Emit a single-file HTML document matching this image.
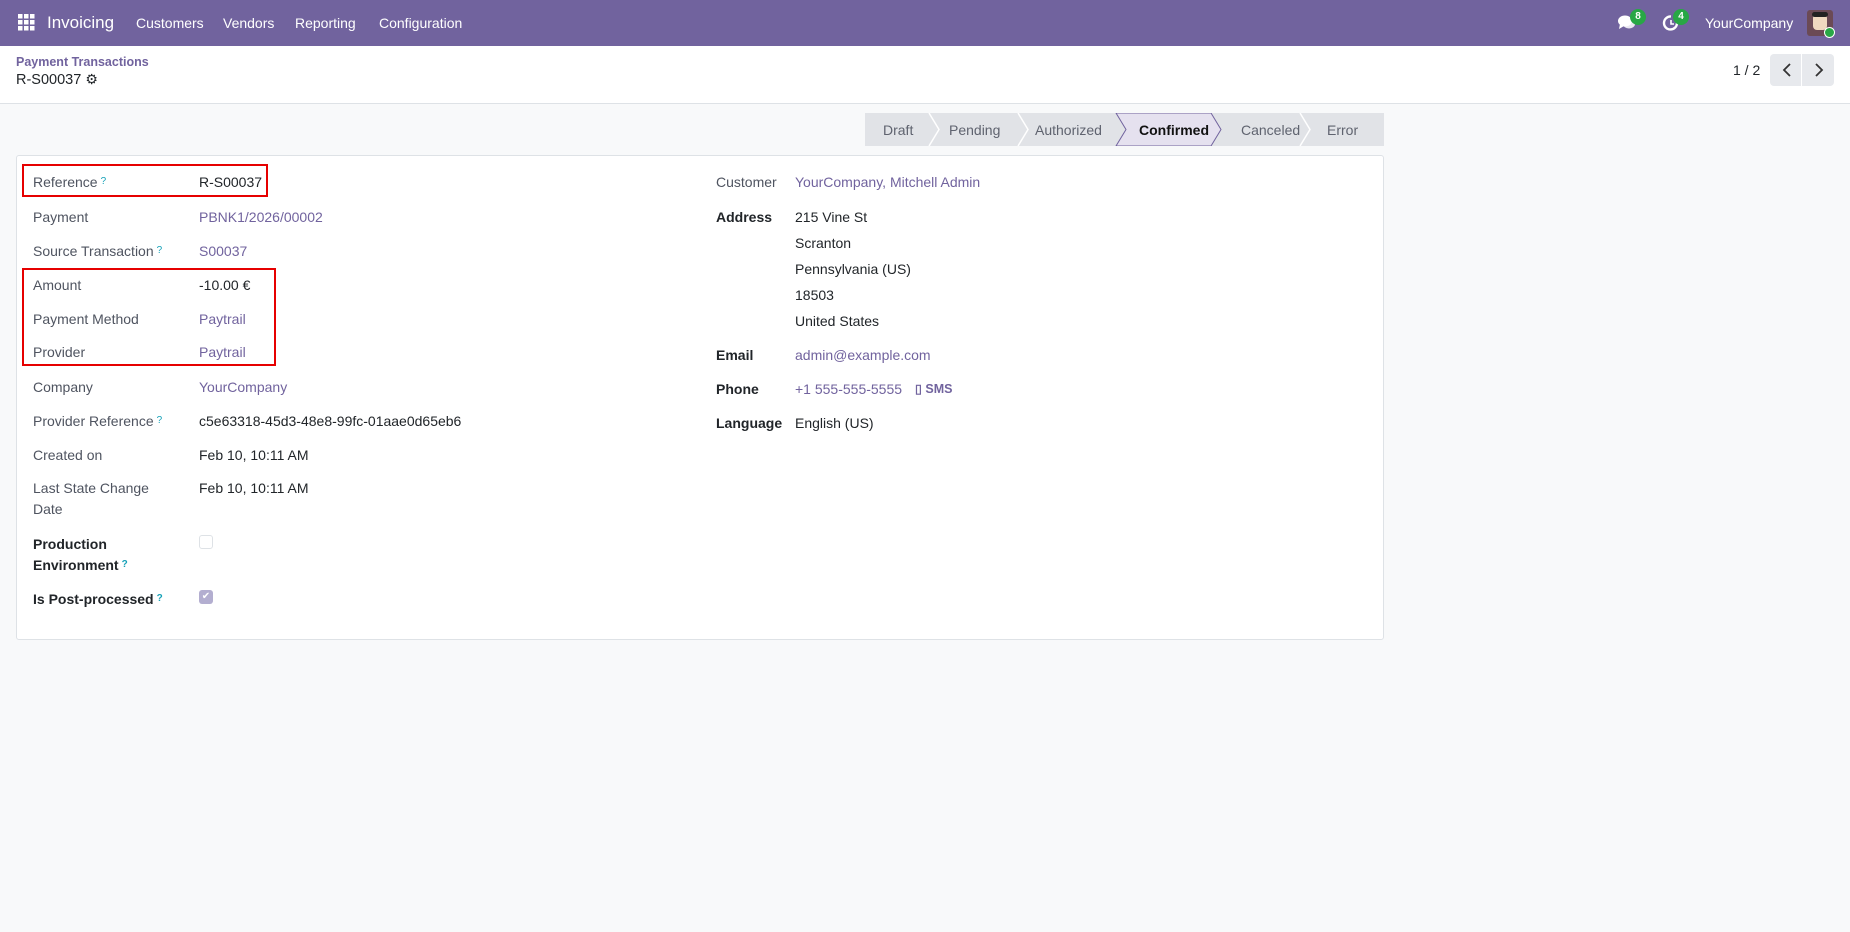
<!DOCTYPE html>
<html><head><meta charset="utf-8"><style>
*{box-sizing:border-box;margin:0;padding:0}
body{width:1850px;height:932px;background:#f8f9fa;font-family:"Liberation Sans",sans-serif;font-size:14px;color:#212529;position:relative;overflow:hidden}
.nav{position:absolute;left:0;top:0;width:1850px;height:46px;background:#71639e;color:#fff}
.nav span{position:absolute;top:15px;font-size:14px}
.cp{position:absolute;left:0;top:46px;width:1850px;height:58px;background:#fff;border-bottom:1px solid #dee2e6}
.a{position:absolute;white-space:nowrap;line-height:20px}
.l{color:#4f5460}
.b{font-weight:bold;color:#212529}
.k{color:#71639e}
.q{color:#17a2b8;font-size:10px;vertical-align:top;margin-left:3px}
.sheet{position:absolute;left:16px;top:155px;width:1368px;height:485px;background:#fff;border:1px solid #dee2e6;border-radius:3px}
.red{position:absolute;border:2px solid #e60000}
.badge{position:absolute;background:#28a745;color:#fff;font-size:10px;font-weight:bold;border-radius:8px;width:16px;height:16px;text-align:center;line-height:16px}
</style></head><body>
<div class="nav">
<svg style="position:absolute;left:18px;top:14px" width="17" height="17" viewBox="0 0 17 17" fill="#fff"><rect x="0" y="0" width="4.5" height="4.5"/><rect x="6" y="0" width="4.5" height="4.5"/><rect x="12" y="0" width="4.5" height="4.5"/><rect x="0" y="6" width="4.5" height="4.5"/><rect x="6" y="6" width="4.5" height="4.5"/><rect x="12" y="6" width="4.5" height="4.5"/><rect x="0" y="12" width="4.5" height="4.5"/><rect x="6" y="12" width="4.5" height="4.5"/><rect x="12" y="12" width="4.5" height="4.5"/></svg>
<span style="left:47px;top:13px;font-size:17px">Invoicing</span>
<span style="left:136px">Customers</span>
<span style="left:223px">Vendors</span>
<span style="left:295px">Reporting</span>
<span style="left:379px">Configuration</span>
<svg style="position:absolute;left:1617px;top:14px" width="20" height="18" viewBox="0 0 20 18" fill="#fff"><ellipse cx="8" cy="7" rx="7" ry="5.5"/><path d="M3 10 L2 15 L7 12Z"/><ellipse cx="12" cy="10" rx="6" ry="4.5" opacity=".85"/></svg>
<div class="badge" style="left:1630px;top:9px">8</div>
<svg style="position:absolute;left:1662px;top:14px" width="18" height="18" viewBox="0 0 18 18" fill="none" stroke="#fff" stroke-width="2.4"><path d="M15 9 A6.5 6.5 0 1 1 9 2.5"/><path d="M9 6 V10 H12" stroke-width="1.6"/></svg>
<div class="badge" style="left:1673px;top:9px">4</div>
<span style="left:1705px">YourCompany</span>
<div style="position:absolute;left:1807px;top:10px;width:26px;height:26px;background:#6b4a55;border-radius:3px"><div style="position:absolute;left:6px;top:4px;width:14px;height:16px;background:#f0d9c0;border-radius:4px"></div><div style="position:absolute;left:5px;top:2px;width:16px;height:5px;background:#222;border-radius:3px"></div></div>
<div style="position:absolute;left:1824px;top:27px;width:11px;height:11px;background:#28a745;border-radius:50%;border:1.5px solid #fff"></div>
</div>
<div class="cp">
<div class="a k" style="left:16px;top:6px;font-size:12.5px;font-weight:bold">Payment Transactions</div>
<div class="a" style="left:16px;top:23px;font-size:14.5px">R-S00037 <span style="font-size:14px">⚙</span></div>
<div class="a" style="left:1733px;top:14px">1 / 2</div>
<div style="position:absolute;left:1770px;top:8px;width:64px;height:32px;background:#e7e9ed;border-radius:4px"></div>
<div style="position:absolute;left:1801px;top:8px;width:1px;height:32px;background:#fff"></div>
<svg style="position:absolute;left:1779px;top:15px" width="48" height="18" viewBox="0 0 48 18" fill="none" stroke="#333" stroke-width="1.8"><path d="M11 3 L5 9 L11 15"/><path d="M37 3 L43 9 L37 15"/></svg>
</div>
<svg style="position:absolute;left:865px;top:113px" width="519" height="33" viewBox="0 0 519 33">
<rect width="519" height="33" fill="#e1e3e7"/>
<polygon points="251,0 346,0 356,16.5 346,33 251,33 261,16.5" fill="#e5e1ef" stroke="#71639e" stroke-width="1"/>
<g fill="none" stroke="#fff" stroke-width="1.5"><path d="M64 0 L74 16.5 L64 33"/><path d="M153 0 L163 16.5 L153 33"/><path d="M435 0 L445 16.5 L435 33"/></g>
<g font-family="Liberation Sans" font-size="14" fill="#5f636f"><text x="18" y="22">Draft</text><text x="84" y="22">Pending</text><text x="170" y="22">Authorized</text><text x="274" y="22" fill="#111" font-weight="bold">Confirmed</text><text x="376" y="22">Canceled</text><text x="462" y="22">Error</text></g>
</svg>
<div class="sheet"></div>
<div class="red" style="left:22px;top:164px;width:246px;height:33px"></div>
<div class="red" style="left:22px;top:268px;width:254px;height:98px"></div>
<div class="a l" style="left:33px;top:172px">Reference<span class="q">?</span></div><div class="a" style="left:199px;top:172px">R-S00037</div>
<div class="a l" style="left:33px;top:207px">Payment</div><div class="a k" style="left:199px;top:207px">PBNK1/2026/00002</div>
<div class="a l" style="left:33px;top:241px">Source Transaction<span class="q">?</span></div><div class="a k" style="left:199px;top:241px">S00037</div>
<div class="a l" style="left:33px;top:275px">Amount</div><div class="a" style="left:199px;top:275px">-10.00 €</div>
<div class="a l" style="left:33px;top:309px">Payment Method</div><div class="a k" style="left:199px;top:309px">Paytrail</div>
<div class="a l" style="left:33px;top:342px">Provider</div><div class="a k" style="left:199px;top:342px">Paytrail</div>
<div class="a l" style="left:33px;top:377px">Company</div><div class="a k" style="left:199px;top:377px">YourCompany</div>
<div class="a l" style="left:33px;top:411px">Provider Reference<span class="q">?</span></div><div class="a" style="left:199px;top:411px">c5e63318-45d3-48e8-99fc-01aae0d65eb6</div>
<div class="a l" style="left:33px;top:445px">Created on</div><div class="a" style="left:199px;top:445px">Feb 10, 10:11 AM</div>
<div class="a l" style="left:33px;top:478px">Last State Change</div><div class="a l" style="left:33px;top:499px">Date</div><div class="a" style="left:199px;top:478px">Feb 10, 10:11 AM</div>
<div class="a b" style="left:33px;top:534px">Production</div><div class="a b" style="left:33px;top:555px">Environment<span class="q">?</span></div>
<div style="position:absolute;left:199px;top:535px;width:14px;height:14px;border:1px solid #dee2e6;border-radius:3px;background:#fff"></div>
<div class="a b" style="left:33px;top:589px">Is Post-processed<span class="q">?</span></div>
<div style="position:absolute;left:199px;top:590px;width:14px;height:14px;border-radius:3px;background:#b3aed0;color:#fff;font-size:10px;text-align:center;line-height:14px">✔</div>
<div class="a l" style="left:716px;top:172px">Customer</div><div class="a k" style="left:795px;top:172px">YourCompany, Mitchell Admin</div>
<div class="a b" style="left:716px;top:207px">Address</div>
<div class="a" style="left:795px;top:207px">215 Vine St</div>
<div class="a" style="left:795px;top:233px">Scranton</div>
<div class="a" style="left:795px;top:259px">Pennsylvania (US)</div>
<div class="a" style="left:795px;top:285px">18503</div>
<div class="a" style="left:795px;top:311px">United States</div>
<div class="a b" style="left:716px;top:345px">Email</div><div class="a k" style="left:795px;top:345px">admin@example.com</div>
<div class="a b" style="left:716px;top:379px">Phone</div><div class="a k" style="left:795px;top:379px">+1 555-555-5555</div>
<div class="a k" style="left:915px;top:379px;font-size:12.5px;font-weight:bold">▯ SMS</div>
<div class="a b" style="left:716px;top:413px">Language</div><div class="a" style="left:795px;top:413px">English (US)</div>
</body></html>
